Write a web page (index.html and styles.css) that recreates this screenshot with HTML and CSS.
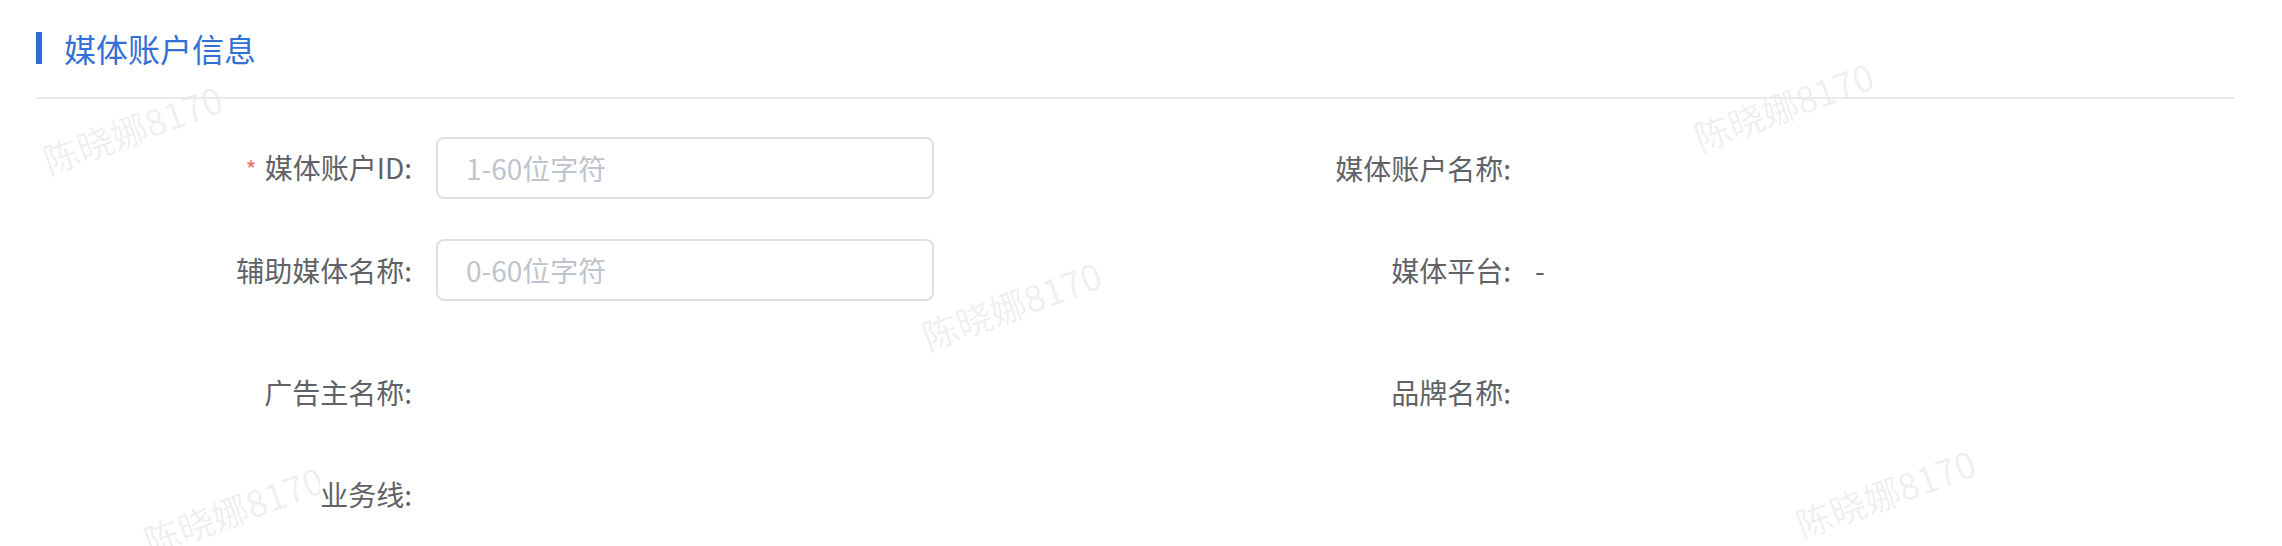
FILE: index.html
```html
<!DOCTYPE html>
<html lang="zh-CN">
<head>
<meta charset="utf-8">
<title>媒体账户信息</title>
<link rel="stylesheet" href="styles.css">
</head>
<body>
<div class="page">
  <div class="watermarks" aria-hidden="true">
    <span class="wm wm-1">陈晓娜8170</span>
    <span class="wm wm-2">陈晓娜8170</span>
    <span class="wm wm-3">陈晓娜8170</span>
    <span class="wm wm-4">陈晓娜8170</span>
    <span class="wm wm-5">陈晓娜8170</span>
  </div>
  <div class="content">
    <div class="section-title">媒体账户信息</div>
    <div class="divider"></div>
    <form class="form">
      <div class="form-item">
        <label class="label"><span class="label-text"><span class="required">*</span>媒体账户ID:</span></label>
        <input class="input" type="text" placeholder="1-60位字符">
      </div>
      <div class="form-item">
        <label class="label"><span class="label-text">媒体账户名称:</span></label>
        <span class="value"></span>
      </div>
      <div class="form-item row-extra">
        <label class="label"><span class="label-text">辅助媒体名称:</span></label>
        <input class="input" type="text" placeholder="0-60位字符">
      </div>
      <div class="form-item row-extra">
        <label class="label"><span class="label-text">媒体平台:</span></label>
        <span class="value">-</span>
      </div>
      <div class="form-item">
        <label class="label"><span class="label-text">广告主名称:</span></label>
        <span class="value"></span>
      </div>
      <div class="form-item">
        <label class="label"><span class="label-text">品牌名称:</span></label>
        <span class="value"></span>
      </div>
      <div class="form-item">
        <label class="label"><span class="label-text">业务线:</span></label>
        <span class="value"></span>
      </div>
    </form>
  </div>
</div>
</body>
</html>
```

FILE: styles.css
```css
html, body {
  margin: 0;
  padding: 0;
  background: #ffffff;
}

body {
  font-family: "Noto Sans CJK SC", "Noto Sans", sans-serif;
  color: #606266;
  width: 2282px;
  height: 546px;
  overflow: hidden;
}

.page {
  position: relative;
  padding: 32px 48px 0 36px;
  height: 546px;
  box-sizing: border-box;
}

.content {
  position: relative;
  z-index: 1;
}

.section-title {
  height: 32px;
  line-height: 32px;
  border-left: 6px solid #2f6bd6;
  padding-left: 22px;
  font-size: 32px;
  color: #3370d6;
}

.divider {
  margin-top: 33px;
  height: 2px;
  background: #e8eaed;
}

.form {
  margin: 38px 0 0 0;
  display: grid;
  grid-template-columns: 1fr 1fr;
  row-gap: 40px;
}

.form-item {
  display: flex;
  align-items: center;
  height: 62px;
}

.row-extra {
  margin-bottom: 20px;
}

.label {
  width: 400px;
  flex: none;
  box-sizing: border-box;
  padding-right: 24px;
  text-align: right;
  font-size: 28px;
  line-height: 62px;
  color: #606266;
}

.label-text {
  background: #ffffff;
}

.required {
  color: #f56c6c;
  margin-right: 8px;
  font-size: 24px;
}

.input {
  width: 498px;
  height: 62px;
  box-sizing: border-box;
  border: 2px solid #dcdfe6;
  border-radius: 8px;
  padding: 0 28px;
  font-family: inherit;
  font-size: 28px;
  color: #606266;
  background: #ffffff;
  outline: none;
}

.input::placeholder {
  color: #c0c4cc;
}

.value {
  font-size: 28px;
  line-height: 62px;
  color: #606266;
}

.watermarks {
  position: absolute;
  inset: 0;
  z-index: 0;
  pointer-events: none;
}

.wm {
  position: absolute;
  width: 200px;
  height: 52px;
  line-height: 52px;
  text-align: center;
  font-size: 36px;
  color: rgba(0, 0, 0, 0.07);
  white-space: nowrap;
  transform: rotate(-20deg);
}

.wm-1 { left: 32px;   top: 102px; }
.wm-2 { left: 1683px; top: 79px; }
.wm-3 { left: 911px;  top: 278px; }
.wm-4 { left: 133px;  top: 483px; }
.wm-5 { left: 1785px; top: 466px; }
```
